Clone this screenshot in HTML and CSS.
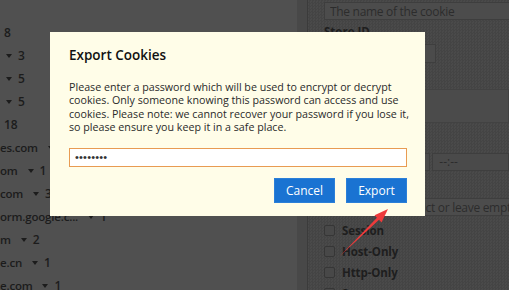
FILE: index.html
```html
<!DOCTYPE html>
<html lang="en">
<head>
  <meta charset="UTF-8" />
  <title>Export Cookies</title>
  <link rel="stylesheet" href="styles.css">
</head>
<body>
  <div class="app">
    <aside class="domains">
      <div class="row"><span class="count">8</span></div>
      <div class="row"><span class="caret"></span><span class="count">3</span></div>
      <div class="row"><span class="caret"></span><span class="count">5</span></div>
      <div class="row"><span class="caret"></span><span class="count">5</span></div>
      <div class="row"><span class="count">18</span></div>
      <div class="row"><span class="name">es.com</span><span class="caret"></span><span class="count">1</span></div>
      <div class="row"><span class="name">om</span><span class="caret"></span><span class="count">1</span></div>
      <div class="row"><span class="name">com</span><span class="caret"></span><span class="count">3</span></div>
      <div class="row"><span class="name">orm.google.c...</span><span class="caret"></span><span class="count">1</span></div>
      <div class="row"><span class="name">m</span><span class="caret"></span><span class="count">2</span></div>
      <div class="row"><span class="name">e.cn</span><span class="caret"></span><span class="count">1</span></div>
      <div class="row"><span class="name">e.com</span><span class="caret"></span><span class="count">1</span></div>
    </aside>
    <div class="scrollbar"></div>

    <section class="editor">
      <input class="field" type="text" placeholder="The name of the cookie">
      <label class="label">Store ID</label>
      <div class="select"></div>
      <label class="label">Value</label>
      <div class="value-box"></div>
      <label class="label">Expiration</label>
      <div class="date-row">
        <div class="date"><span class="picker"></span></div>
        <div class="time">--:--</div>
      </div>
      <label class="label">Domain</label>
      <input class="field domain-field" type="text" placeholder="Domain to restrict or leave empty">
      <div class="checks">
        <label class="check"><span class="box"></span>Session</label>
        <label class="check"><span class="box"></span>Host-Only</label>
        <label class="check"><span class="box"></span>Http-Only</label>
        <label class="check"><span class="box"></span>Secure</label>
      </div>
    </section>
  </div>

  <div class="dialog">
    <h2>Export Cookies</h2>
    <p>Please enter a password which will be used to encrypt or decrypt<br>
      cookies. Only someone knowing this password can access and use<br>
      cookies. Please note: we cannot recover your password if you lose it,<br>
      so please ensure you keep it in a safe place.</p>
    <input class="password" type="password" value="secret12">
    <div class="actions">
      <button class="btn">Cancel</button>
      <button class="btn">Export</button>
    </div>
  </div>

  <!-- annotation arrow -->
  <svg class="arrow" viewBox="0 0 509 290" xmlns="http://www.w3.org/2000/svg">
    <polygon points="340,256 379.05,219.87 381.5,222.4 388,209 374.5,215.2 376.95,217.73" fill="#ee3b3b"/>
  </svg>
</body>
</html>
```

FILE: styles.css
```css
body {
  margin: 0;
  padding: 0;
  width: 509px;
  height: 290px;
  overflow: hidden;
  font-family: 'Open Sans', 'Noto Sans', Arial, sans-serif;
  background-color: #4f4f4f;
  position: relative;
}

.app {
  display: flex;
  height: 290px;
}

.domains {
  flex-shrink: 0;
  width: 297px;
  padding-top: 21px;
  background-color: #505050;
  color: #1c1c1c;
  font-size: 12px;
  font-weight: 600;
}

.row {
  display: flex;
  align-items: center;
  height: 23px;
  padding-left: 4px;
  white-space: nowrap;
}

.row .name {
  margin-left: -4px;
  margin-right: 8px;
  font-size: 11.5px;
  letter-spacing: -0.2px;
}

.caret {
  width: 0;
  height: 0;
  border-left: 3px solid transparent;
  border-right: 3px solid transparent;
  border-top: 4px solid #1c1c1c;
  margin-right: 6px;
  margin-left: 2px;
}

.scrollbar {
  flex-shrink: 0;
  width: 10px;
  background-color: #484848;
  border-right: 1px solid #3b3b3b;
}

.editor {
  flex: 1;
  min-width: 0;
  overflow: hidden;
  display: flex;
  flex-direction: column;
  padding: 2px 0 0 16px;
  background: repeating-conic-gradient(#444444 0 25%, #4a4a4a 0 50%) 0 0 / 3px 3px;
  color: #1e1e1e;
  font-size: 12px;
}

.editor > * {
  flex-shrink: 0;
}

.field {
  box-sizing: border-box;
  width: 260px;
  height: 18px;
  padding: 0 5px;
  border: 1px solid #3e3e3e;
  background-color: #4c4c4c;
  font-family: inherit;
  font-size: 12px;
  letter-spacing: -0.3px;
  color: #2c2c2c;
}

.field::placeholder {
  color: #2c2c2c;
}

.domain-field {
  margin-top: 3px;
  padding-left: 14px;
}

.label {
  font-weight: 700;
  font-size: 11.5px;
  height: 24px;
  line-height: 24px;
}

.select {
  width: 112px;
  height: 19px;
  border: 1px solid #3e3e3e;
  background-color: #4b4b4b;
  box-sizing: border-box;
}

.value-box {
  height: 34px;
  margin-top: 2px;
  background-color: #4b4b4b;
  border: 1px solid #424242;
  box-sizing: border-box;
}

.date-row {
  display: flex;
  gap: 2px;
  margin-top: 6px;
}

.date, .time {
  box-sizing: border-box;
  height: 18px;
  border: 1px solid #3e3e3e;
  background-color: #4a4a4a;
}

.date {
  width: 111px;
  display: flex;
  justify-content: flex-end;
  align-items: center;
  padding-right: 7px;
}

.picker {
  width: 3px;
  height: 12px;
  background-color: #262626;
}

.time {
  width: 80px;
  padding-left: 6px;
  font-size: 12px;
  line-height: 16px;
  color: #2c2c2c;
}

.checks {
  display: flex;
  flex-direction: column;
  margin-top: 4px;
}

.check {
  display: flex;
  align-items: center;
  gap: 7px;
  height: 21px;
  font-size: 11.5px;
  font-weight: 700;
  letter-spacing: -0.1px;
}

.box {
  width: 9px;
  height: 9px;
  border: 1px solid #363636;
  border-radius: 2px;
  background-color: #484848;
}

/* Export dialog */
.dialog {
  position: absolute;
  left: 50px;
  top: 32px;
  width: 375px;
  height: 184px;
  box-sizing: border-box;
  padding: 12px 18px 0 19px;
  background-color: #fffde8;
  color: #222;
}

.dialog h2 {
  margin: 0;
  font-size: 13.5px;
  font-weight: 600;
  line-height: 22px;
  color: #111;
}

.dialog p {
  margin: 15px 0 0;
  font-size: 10.7px;
  line-height: 13.4px;
  white-space: nowrap;
  color: #2a2a2a;
}

.password {
  display: block;
  box-sizing: border-box;
  width: 338px;
  height: 19px;
  margin-top: 13px;
  padding: 0 5px;
  border: 1px solid #e89b52;
  background-color: #fff;
  font-size: 11px;
  letter-spacing: 0.2px;
  color: #333;
  outline: none;
}

.actions {
  display: flex;
  justify-content: flex-end;
  gap: 11px;
  margin-top: 11px;
}

.btn {
  width: 61px;
  height: 25px;
  border: 1px solid #2b7fd8;
  background-color: #1a73d2;
  color: #fff;
  font-family: 'Open Sans', 'Noto Sans', Arial, sans-serif;
  font-size: 12px;
  padding: 0;
}

.arrow {
  position: absolute;
  left: 0;
  top: 0;
  width: 509px;
  height: 290px;
  pointer-events: none;
}
```
